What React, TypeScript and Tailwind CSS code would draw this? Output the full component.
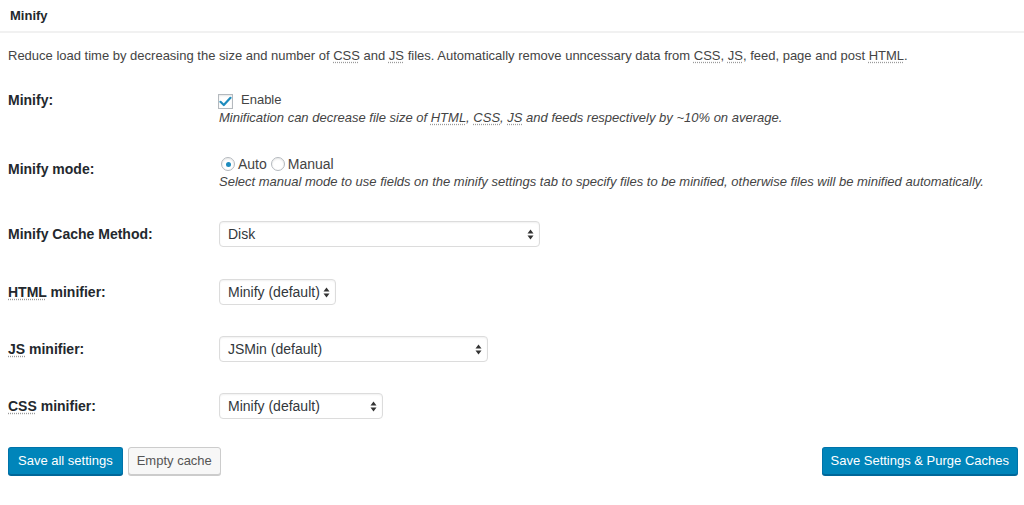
import React from "react";

const Abbr = ({ children }: { children: React.ReactNode }) => (
  <abbr className="no-underline underline decoration-dotted decoration-[#9a9a9a] underline-offset-[2px]">
    {children}
  </abbr>
);

const Arrows = () => (
  <svg width="7" height="11" viewBox="0 0 7 11" className="shrink-0">
    <path d="M3.5 0.5 L6.5 4.5 L0.5 4.5 Z" fill="#333" />
    <path d="M3.5 10.5 L6.5 6.5 L0.5 6.5 Z" fill="#333" />
  </svg>
);

const FakeSelect = ({ text, width }: { text: string; width: string }) => (
  <div
    className={`${width} h-[26px] flex items-center justify-between pl-[8px] pr-[5px] bg-white border border-[#dcdcdc] rounded-[4px] shadow-[inset_0_1px_2px_rgba(0,0,0,0.06)] text-[14px] text-[#32373c]`}
  >
    <span>{text}</span>
    <Arrows />
  </div>
);

const Label = ({ children, extra = "" }: { children: React.ReactNode; extra?: string }) => (
  <div className={`w-[211px] shrink-0 text-[14px] font-bold text-[#23282d] leading-[18px] ${extra}`}>
    {children}
  </div>
);

export default function App() {
  return (
    <div className="w-[1024px] h-[505px] bg-white text-[#444] font-['Liberation_Sans',Arial,sans-serif] text-[13px] overflow-hidden">
      <div className="pl-[10px] pt-[8px] pb-[7px] border-b-2 border-[#f1f1f1] text-[13px] font-bold text-[#23282d] leading-[16px]">
        Minify
      </div>

      <div className="pl-[8px] pr-[8px]">
        <p className="mt-[15px] leading-[16px]">
          Reduce load time by decreasing the size and number of <Abbr>CSS</Abbr> and <Abbr>JS</Abbr> files.
          Automatically remove unncessary data from <Abbr>CSS</Abbr>, <Abbr>JS</Abbr>, feed, page and post{" "}
          <Abbr>HTML</Abbr>.
        </p>

        {/* Minify */}
        <div className="mt-[27px] flex items-start">
          <Label>Minify:</Label>
          <div className="flex flex-col">
            <div className="h-[18px] flex items-center">
              <span className="w-[15px] h-[15px] -ml-[1px] mt-[3px] border border-[#b4b9be] bg-white shadow-[inset_0_1px_2px_rgba(0,0,0,0.1)] flex items-center justify-center">
                <svg width="13" height="11" viewBox="0 0 13 11">
                  <path d="M1.5 5.8 L4.8 9 L11.5 1.8" stroke="#1e8cbe" strokeWidth="2.2" fill="none" strokeLinecap="round" strokeLinejoin="round" />
                </svg>
              </span>
              <span className="ml-[8px] text-[13px] text-[#444]">Enable</span>
            </div>
            <span className="italic leading-[18px]">
              Minification can decrease file size of <Abbr>HTML</Abbr>, <Abbr>CSS</Abbr>, <Abbr>JS</Abbr> and feeds
              respectively by ~10% on average.
            </span>
          </div>
        </div>

        {/* Minify mode */}
        <div className="mt-[28px] flex items-start">
          <Label extra="pt-[5px]">Minify mode:</Label>
          <div className="flex flex-col">
            <div className="h-[18px] flex items-center text-[14px]">
              <span className="w-[14px] h-[14px] ml-[2px] rounded-full border border-[#b4b9be] bg-white shadow-[inset_0_1px_2px_rgba(0,0,0,0.1)] flex items-center justify-center">
                <span className="w-[5px] h-[5px] rounded-full bg-[#1e8cbe]" />
              </span>
              <span className="ml-[3px]">Auto</span>
              <span className="w-[14px] h-[14px] ml-[4px] rounded-full border border-[#b4b9be] bg-white shadow-[inset_0_1px_2px_rgba(0,0,0,0.1)]" />
              <span className="ml-[3px]">Manual</span>
            </div>
            <span className="italic leading-[18px]">
              Select manual mode to use fields on the minify settings tab to specify files to be minified, otherwise
              files will be minified automatically.
            </span>
          </div>
        </div>

        {/* Cache method */}
        <div className="mt-[30px] flex items-center">
          <Label>Minify Cache Method:</Label>
          <FakeSelect text="Disk" width="w-[321px]" />
        </div>

        <div className="mt-[32px] flex items-center">
          <Label>
            <Abbr>HTML</Abbr> minifier:
          </Label>
          <FakeSelect text="Minify (default)" width="w-[117px]" />
        </div>

        <div className="mt-[31px] flex items-center">
          <Label>
            <Abbr>JS</Abbr> minifier:
          </Label>
          <FakeSelect text="JSMin (default)" width="w-[269px]" />
        </div>

        <div className="mt-[31px] flex items-center">
          <Label>
            <Abbr>CSS</Abbr> minifier:
          </Label>
          <FakeSelect text="Minify (default)" width="w-[164px]" />
        </div>
      </div>

      <div className="mt-[28px] pl-[8px] pr-[6px] flex items-start justify-between">
        <div className="flex gap-[5px]">
          <button className="h-[28px] px-[9px] rounded-[3px] bg-[#0085ba] border border-[#0073aa] border-b-[#006799] shadow-[0_1px_0_#006799] text-white text-[13px] leading-[26px]">
            Save all settings
          </button>
          <button className="h-[28px] px-[8px] rounded-[3px] bg-[#f7f7f7] border border-[#cccccc] shadow-[0_1px_0_#cccccc] text-[#555] text-[13px] leading-[26px]">
            Empty cache
          </button>
        </div>
        <button className="h-[28px] px-[8px] rounded-[3px] bg-[#0085ba] border border-[#0073aa] border-b-[#006799] shadow-[0_1px_0_#006799] text-white text-[13px] leading-[26px]">
          Save Settings &amp; Purge Caches
        </button>
      </div>
    </div>
  );
}
